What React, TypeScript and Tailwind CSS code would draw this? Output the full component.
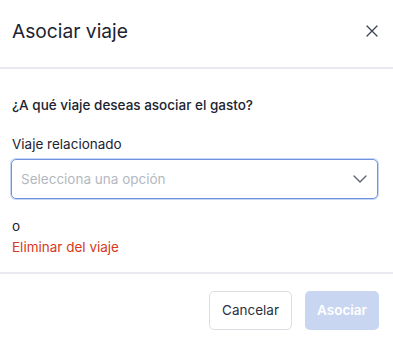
import React from "react";

export default function App() {
  return (
    <div className="w-[393px] h-[342px] bg-white text-[#1c2331] font-['Inter',sans-serif] flex flex-col">
      {/* Header */}
      <div className="flex items-center justify-between pl-[12px] pr-[14px] pt-[19px] pb-[24px] border-b-2 border-[#e9e9ef]">
        <h1 className="text-[19.2px] leading-6 font-normal">Asociar viaje</h1>
        <button className="w-[14px] h-[14px] flex items-center justify-center text-[#3b4252]">
          <svg width="12" height="12" viewBox="0 0 12 12" fill="none" stroke="currentColor" strokeWidth="1.3" strokeLinecap="round">
            <path d="M1 1L11 11M11 1L1 11" />
          </svg>
        </button>
      </div>

      {/* Body */}
      <div className="pl-[11px] pr-[15px] pt-[26px] pb-[15px] border-b-2 border-[#e9e9ef]">
        <p className="text-[13.5px] leading-5 font-medium pl-[1px]">¿A qué viaje deseas asociar el gasto?</p>
        <label className="block mt-[19px] text-[13.5px] leading-5 pl-[1px]">Viaje relacionado</label>
        <div className="mt-[5px] h-[40px] rounded-[5px] border border-[#6f93dd] ring-1 ring-[#c6d5f3] flex items-center justify-between pl-[9px] pr-[10px]">
          <span className="text-[13.5px] text-[#b3b8c0]">Selecciona una opción</span>
          <svg width="14" height="8" viewBox="0 0 14 8" fill="none" stroke="#5b6170" strokeWidth="1.4" strokeLinecap="round" strokeLinejoin="round">
            <path d="M1 1L7 7L13 1" />
          </svg>
        </div>
        <p className="mt-[17px] text-[13.5px] leading-5 pl-[1px]">o</p>
        <button className="block mt-[1px] text-[13.5px] leading-5 text-[#d8391a] pl-[1px]">Eliminar del viaje</button>
      </div>

      {/* Footer */}
      <div className="flex justify-end gap-[13px] pt-[17px] pr-[14px]">
        <button className="h-[39px] w-[83px] rounded-[5px] border border-[#dcdde2] text-[13.5px] text-[#2a3140]">Cancelar</button>
        <button className="h-[39px] w-[74px] rounded-[5px] bg-[#c9d6f1] text-[13.5px] font-semibold text-white">Asociar</button>
      </div>
    </div>
  );
}
